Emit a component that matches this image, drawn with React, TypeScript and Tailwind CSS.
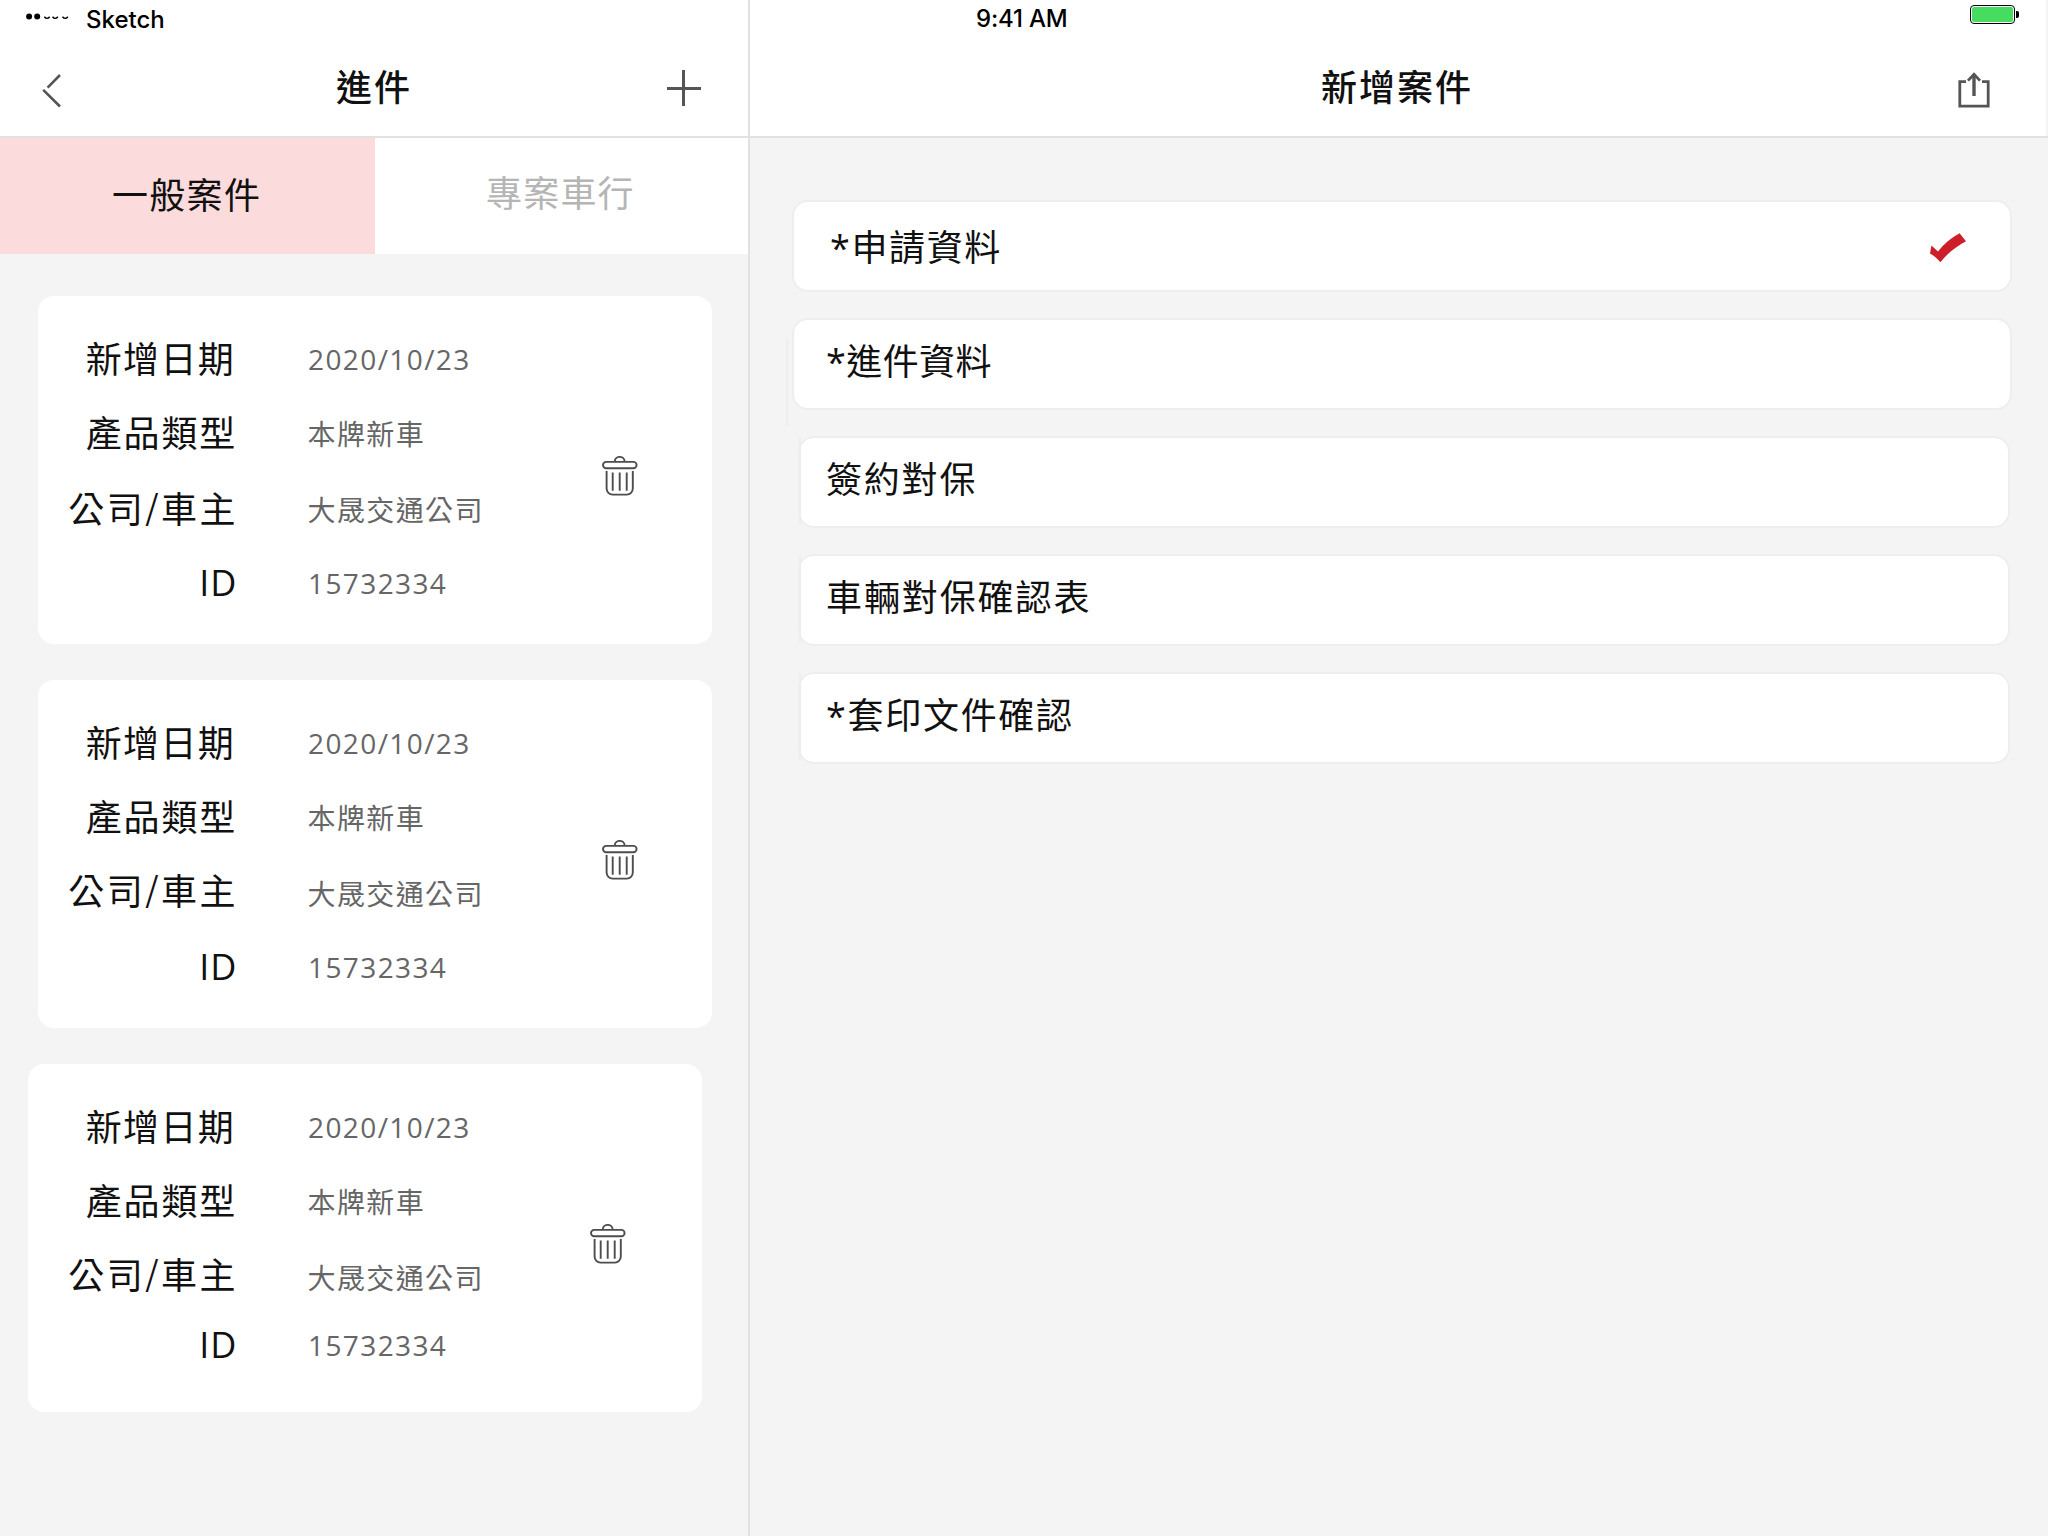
import type { ReactNode } from "react";

const CJK = "font-['Noto_Sans_CJK_TC',sans-serif]";
const MIXED = "font-['Open_Sans','Noto_Sans_CJK_TC',sans-serif]";

function BackIcon() {
  return (
    <svg width="20" height="36" viewBox="0 0 20 36" fill="none" stroke="#555457" strokeWidth="2.6">
      <path d="M18 2 5.6 14.6M1.200 16.800 18 33.500" />
    </svg>
  );
}

function PlusIcon() {
  return (
    <svg width="34" height="36" viewBox="0 0 34 36" fill="none" stroke="#555457" strokeWidth="3">
      <path d="M16.5 0v36M0 18.5h34" />
    </svg>
  );
}

function ShareIcon() {
  return (
    <svg width="32" height="36" viewBox="0 0 32 36" fill="none" stroke="#555457" strokeWidth="2.8">
      <path d="M8 9.6H1.8v24.6h28.4V9.6H24" />
      <path d="M16 24V2.4" strokeWidth="3.4" />
      <path d="M10 8.6 16 2.2l6 6.4" />
    </svg>
  );
}

function TrashIcon() {
  return (
    <svg width="36" height="40" viewBox="0 0 36 40" fill="none" stroke="#4d4c4e" strokeWidth="1.9">
      <path d="M12.8 5.6a4.900 4.700 0 0 1 9.8 0" />
      <rect x="1" y="5.9" width="33.6" height="6.4" rx="3.2" />
      <path d="M4.6 15v17.6a6 6 0 0 0 6 6h14.2a6 6 0 0 0 6-6V15" />
      <path d="M10.7 16.6v18.2M17.7 16.6v18.2M24.7 16.6v18.2" />
    </svg>
  );
}

function CheckIcon() {
  return (
    <svg width="36" height="30" viewBox="0 0 36 30" fill="#cc1f2a">
      <path d="M1.4 12.6 8 18.4C14 11 21 4.600 29.600 0.200L36 8.200C27 13 18 19.500 10.400 29.200C7.500 25.800 4 22.400 0 20.500Z" />
    </svg>
  );
}

function SignalDots() {
  return (
    <svg width="44" height="8" viewBox="0 0 44 8">
      <circle cx="3.100" cy="3.400" r="3" />
      <circle cx="11.200" cy="3.400" r="3" />
      <g fill="none" stroke="#000" strokeWidth="1.400">
        <path d="M18.300 3.800q2.700 3.200 5.400 0M26.500 3.800q2.700 3.200 5.400 0M36.500 3.800q2.700 3.200 5.400 0" />
      </g>
    </svg>
  );
}

function Battery() {
  return (
    <div className="flex items-center gap-px self-start">
      <div className="h-[19px] w-[45px] rounded-[4px] border border-black p-px">
        <div className="h-full w-full rounded-[2px] bg-[#46dc5f]" />
      </div>
      <div className="h-[7px] w-[3px] rounded-r-[2px] bg-black" />
    </div>
  );
}

function Label({ children, className = "" }: { children: ReactNode; className?: string }) {
  return (
    <div className={`${CJK} shrink-0 text-right text-[36px] leading-none whitespace-nowrap text-[#111] ${className}`}>
      {children}
    </div>
  );
}

function Value({ children, className = "" }: { children: ReactNode; className?: string }) {
  return (
    <div className={`text-[28px] leading-none tracking-[1.4px] text-[#666] ${className}`}>{children}</div>
  );
}

type CaseCardProps = { ownerShift?: string; idShift?: string; shifted?: boolean };

function CaseCard({ ownerShift = "pb-[2px]", idShift = "", shifted = false }: CaseCardProps) {
  return (
    <section className={`flex h-[348px] w-[674px] rounded-[16px] bg-white ${shifted ? "ml-[28px]" : "ml-[38px]"}`}>
      <div className={`w-[560px] shrink-0 pt-[25px] ${shifted ? "-ml-[28px] mr-[30px]" : "-ml-[38px] mr-[42px]"}`}>
        <div className="flex h-[74px] items-center">
          <Label className="w-[235px] pb-[2px] tracking-[1.300px]">新增日期</Label>
          <Value className={`${MIXED} pl-[73px] pt-px`}>2020/10/23</Value>
        </div>
        <div className="flex h-[74px] items-center">
          <Label className="w-[237px] pb-[2px] tracking-[1.800px]">產品類型</Label>
          <Value className={`${CJK} pl-[70.5px] pt-px`}>本牌新車</Value>
        </div>
        <div className="flex h-[78px] items-center">
          <Label className={`w-[238px] tracking-[2.500px] ${ownerShift}`}>
            公司<span className="relative -top-[3px] text-[34px]">/</span>車主
          </Label>
          <Value className={`${CJK} pl-[69.5px] pt-px`}>大晟交通公司</Value>
        </div>
        <div className={`flex h-[72px] items-center ${idShift}`}>
          <Label className="w-[237.5px] font-['Open_Sans'] tracking-[1px]">ID</Label>
          <Value className={`${MIXED} pl-[70.5px] pb-px`}>15732334</Value>
        </div>
      </div>
      <div className="pt-[160px]">
        <TrashIcon />
      </div>
    </section>
  );
}

type FormRowProps = {
  title: string;
  tracking: string;
  wide?: boolean;
  pad: string;
  checked?: boolean;
  bar?: string;
};

function FormRow({ title, tracking, wide = false, pad, checked = false, bar }: FormRowProps) {
  return (
    <div
      className={`relative flex h-[92px] items-center justify-between rounded-[16px] border-2 border-[#eeeeee] bg-white ${
        wide ? "ml-[42px] w-[1220px]" : "ml-[48px] w-[1212px]"
      } ${pad}`}
    >
      {bar && <span className={`absolute h-[88px] w-[2px] bg-[#eeeeee] ${bar}`} />}
      <span className={`${MIXED} whitespace-nowrap text-[36px] leading-none text-[#111] ${tracking}`}>{title}</span>
      {checked && (
        <span className="mr-[44px]">
          <CheckIcon />
        </span>
      )}
    </div>
  );
}

export default function App() {
  return (
    <div className="flex h-[1536px] w-[2048px] overflow-hidden bg-[#f4f4f4]">
      <aside className="flex w-[750px] shrink-0 flex-col border-r-2 border-[#e1e1e1]">
        <header className="h-[138px] border-b-2 border-[#e1e1e1] bg-white">
          <div className="flex h-[38px] items-center pl-[26px]">
            <span className="pb-[4px]">
              <SignalDots />
            </span>
            <span className="pl-[16px] pt-[2px] font-['Inter'] text-[24px] font-medium leading-none text-black">Sketch</span>
          </div>
          <div className="flex h-[98px] items-center">
            <div className="w-[336px] pl-[42px] pt-[8px]">
              <BackIcon />
            </div>
            <h1 className={`${CJK} w-[331px] pb-[5px] text-[36px] font-medium leading-none tracking-[2px] text-[#111]`}>進件</h1>
            <span className="pt-[2px]">
              <PlusIcon />
            </span>
          </div>
        </header>
        <nav className="flex h-[116px] bg-white text-[36px] leading-none">
          <div className={`${CJK} flex w-[375px] items-center bg-[#fbdbdc] pb-[7px] pl-[112px] tracking-[1.300px] text-[#111]`}>
            一般案件
          </div>
          <div className={`${CJK} flex flex-1 items-center pb-[11px] pl-[111px] tracking-[1.200px] text-[#b5b5b5]`}>專案車行</div>
        </nav>
        <div className="flex flex-col gap-[36px] pt-[42px]">
          <CaseCard />
          <CaseCard ownerShift="pb-[6px]" />
          <CaseCard ownerShift="pb-[6px]" idShift="-mt-[6px]" shifted />
        </div>
      </aside>
      <main className="flex flex-1 flex-col">
        <header className="h-[138px] border-b-2 border-[#e1e1e1]">
          <div className="mr-[2px] h-full bg-white">
            <div className="flex h-[38px] justify-between pl-[226px] pr-[27px] pt-[5px]">
              <span className="pt-[1px] font-['Inter'] text-[24px] font-medium leading-[26px] tracking-[-0.2px] text-black">
                9:41 AM
              </span>
              <Battery />
            </div>
            <div className="flex h-[98px] items-center">
              <h2
                className={`${CJK} ml-[571px] w-[637px] pb-[5px] text-[36px] font-medium leading-none tracking-[2px] text-[#111]`}
              >
                新增案件
              </h2>
              <span className="pt-[6px]">
                <ShareIcon />
              </span>
            </div>
          </div>
        </header>
        <div className="flex flex-col gap-[26px] pt-[62px]">
          <FormRow title="*申請資料" tracking="tracking-[1.600px]" wide checked pad="pl-[36px] pt-[3px]" />
          <FormRow title="*進件資料" tracking="tracking-[0.400px]" wide pad="pl-[32px] pb-[5px]" bar="-left-[8px] top-[18px]" />
          <FormRow title="簽約對保" tracking="tracking-[1.800px]" pad="pl-[26px] pb-[5px]" bar="-left-[1px] -top-[1px]" />
          <FormRow title="車輛對保確認表" tracking="tracking-[1.900px]" pad="pl-[26px] pb-[5px]" bar="-left-[1px] -top-[1px]" />
          <FormRow title="*套印文件確認" tracking="tracking-[1.700px]" pad="pl-[26px] pb-[5px]" bar="-left-[1px] -top-[1px]" />
        </div>
      </main>
    </div>
  );
}
